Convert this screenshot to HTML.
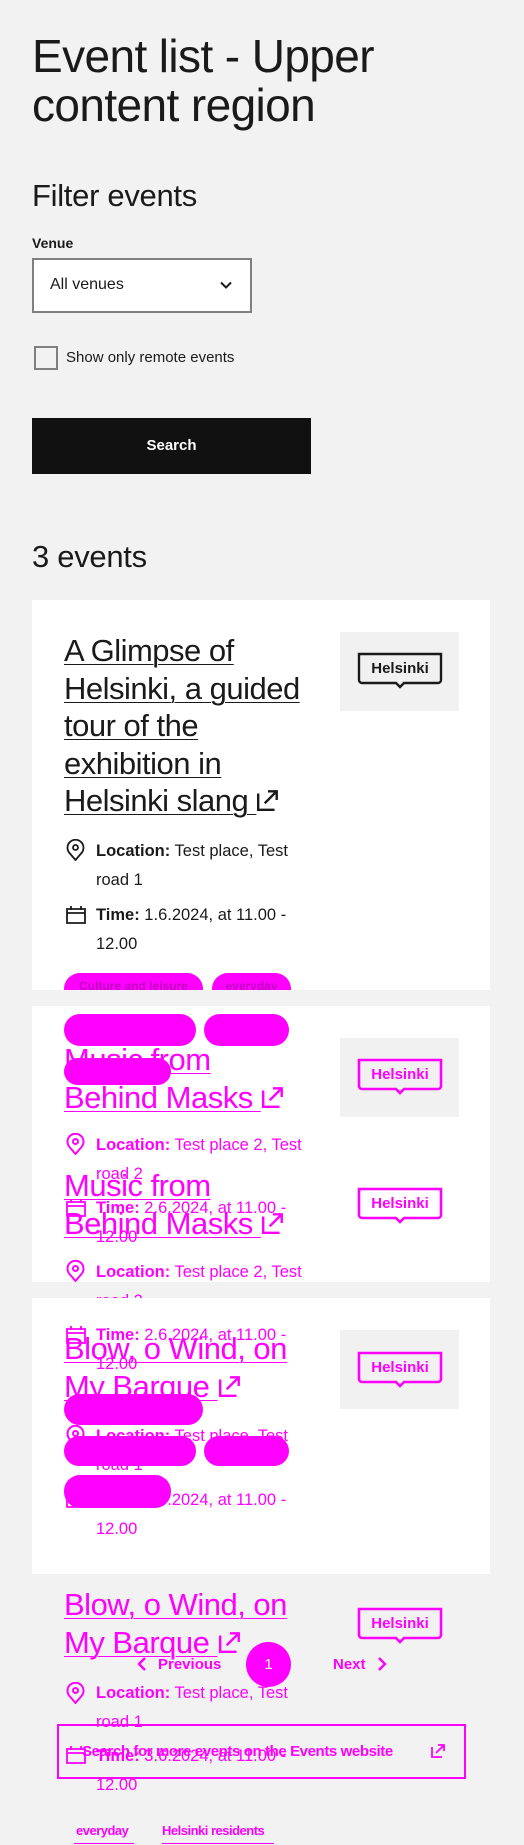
<!DOCTYPE html>
<html><head><meta charset="utf-8">
<style>
*{margin:0;padding:0;box-sizing:border-box}
body{width:524px;height:1845px;background:#f2f2f2;position:relative;overflow:hidden;font-family:"Liberation Sans",sans-serif;color:#1a1a1a}
.a{position:absolute;white-space:nowrap}
.card{position:absolute;left:32px;width:458px;background:#fff}
.t{font-size:31px;line-height:37.5px;letter-spacing:-0.5px;text-decoration:underline;text-decoration-thickness:1px;text-underline-offset:3px}
.m{font-size:16.5px;line-height:28.5px}
.mg{color:#ff00ff}
.pill{position:absolute;background:#ff00ff;border-radius:16px;color:#ff00ff;font-size:12px;font-weight:bold;text-align:center;overflow:hidden}
.img{position:absolute;left:340px;width:119px;height:79px;background:#f1f1f1}
.logo{position:absolute;left:357px;width:86px;height:38px}
</style></head><body>

<div class="a" style="left:32px;top:32px;font-size:46px;line-height:49px;letter-spacing:-0.6px">Event list - Upper<br>content region</div>
<div class="a" style="left:32px;top:178px;font-size:31px;line-height:36px;letter-spacing:-0.3px">Filter events</div>
<div class="a" style="left:32px;top:234px;font-size:14px;line-height:18px;font-weight:bold">Venue</div>
<div class="a" style="left:32px;top:258px;width:220px;height:55px;background:#fff;border:2px solid #808080"></div>
<div class="a" style="left:50px;top:275px;font-size:16px;line-height:20px">All venues</div>
<svg class="a" style="left:219px;top:278px" width="14" height="14" viewBox="0 0 14 14"><path d="M2 4.5l5 5 5-5" fill="none" stroke="#1a1a1a" stroke-width="2"/></svg>
<div class="a" style="left:34px;top:346px;width:24px;height:24px;border:2px solid #808080;background:#f2f2f2"></div>
<div class="a" style="left:66px;top:348px;font-size:15px;line-height:20px">Show only remote events</div>
<div class="a" style="left:32px;top:418px;width:279px;height:56px;background:#111;color:#fff;font-size:15px;font-weight:bold;text-align:center;line-height:56px">Search</div>
<div class="a" style="left:32px;top:539px;font-size:31px;line-height:36px;letter-spacing:-0.3px">3 events</div>

<!-- card 1 -->
<div class="card" style="top:600px;height:390px;overflow:hidden">
  <div class="pill" style="left:32px;top:373px;width:139px;height:32px;line-height:26px;color:#c000c0">Culture and leisure</div>
  <div class="pill" style="left:180px;top:373px;width:79px;height:32px;line-height:26px;color:#c000c0">everyday</div>
</div>
<div class="a t" style="left:64px;top:632px">A Glimpse of<br>Helsinki, a guided<br>tour of the<br>exhibition in<br>Helsinki slang <svg width="24" height="24" viewBox="0 0 22 22" style="vertical-align:-1px"><path d="M2 5v15h15M8 14L19 3M11 3h8v8" fill="none" stroke="#1a1a1a" stroke-width="2.2"/></svg></div>
<div class="img" style="top:632px"></div>
<svg class="logo" style="top:652px" viewBox="0 0 86 38"><path d="M2 2h82v26a3 3 0 0 1-3 3H47l-4 4-4-4H5a3 3 0 0 1-3-3z" fill="none" stroke="#1a1a1a" stroke-width="2.4"/><text x="43" y="21" font-family="Liberation Sans" font-weight="bold" font-size="15" text-anchor="middle" fill="#1a1a1a">Helsinki</text></svg>
<svg class="a" style="left:66px;top:839px" width="19" height="22" viewBox="0 0 19 22"><path d="M9.5 21l-6-7a8 8 0 1 1 12 0z" fill="none" stroke="#1a1a1a" stroke-width="1.8"/><circle cx="9.5" cy="8.5" r="2.5" fill="none" stroke="#1a1a1a" stroke-width="1.8"/></svg>
<div class="a m" style="left:96px;top:837px"><b>Location:</b> Test place, Test<br>road 1</div>
<svg class="a" style="left:66px;top:906px" width="20" height="18" viewBox="0 0 20 18"><path d="M1 3h18v14H1zM1 7h18M5 0v4M15 0v4" fill="none" stroke="#1a1a1a" stroke-width="1.8"/></svg>
<div class="a m" style="left:96px;top:901px"><b>Time:</b> 1.6.2024, at 11.00 -<br>12.00</div>

<!-- card 2 -->
<div class="card" style="top:1006px;height:276px"></div>
<div class="img" style="top:1038px"></div>
<svg class="logo" style="top:1058px" viewBox="0 0 86 38"><path d="M2 2h82v26a3 3 0 0 1-3 3H47l-4 4-4-4H5a3 3 0 0 1-3-3z" fill="none" stroke="#f0f" stroke-width="2.6"/><text x="43" y="21" font-family="Liberation Sans" font-weight="bold" font-size="15" text-anchor="middle" fill="#f0f">Helsinki</text></svg>
<div class="pill" style="left:64px;top:1014px;width:132px;height:32px"></div>
<div class="pill" style="left:204px;top:1014px;width:85px;height:32px"></div>
<div class="pill" style="left:64px;top:1058px;width:107px;height:27px"></div>
<div class="a t mg" style="left:64px;top:1041px">Music from<br>Behind Masks <svg width="24" height="24" viewBox="0 0 22 22" style="vertical-align:-1px"><path d="M2 5v15h15M8 14L19 3M11 3h8v8" fill="none" stroke="#f0f" stroke-width="2.2"/></svg></div>
<svg class="a" style="left:66px;top:1133px" width="19" height="22" viewBox="0 0 19 22"><path d="M9.5 21l-6-7a8 8 0 1 1 12 0z" fill="none" stroke="#f0f" stroke-width="2"/><circle cx="9.5" cy="8.5" r="2.5" fill="none" stroke="#f0f" stroke-width="2"/></svg>
<div class="a m mg" style="left:96px;top:1131px"><b>Location:</b> Test place 2, Test<br>road 2</div>
<div class="a t mg" style="left:64px;top:1167px">Music from<br>Behind Masks <svg width="24" height="24" viewBox="0 0 22 22" style="vertical-align:-1px"><path d="M2 5v15h15M8 14L19 3M11 3h8v8" fill="none" stroke="#f0f" stroke-width="2.2"/></svg></div>
<svg class="logo" style="top:1187px" viewBox="0 0 86 38"><path d="M2 2h82v26a3 3 0 0 1-3 3H47l-4 4-4-4H5a3 3 0 0 1-3-3z" fill="none" stroke="#f0f" stroke-width="2.6"/><text x="43" y="21" font-family="Liberation Sans" font-weight="bold" font-size="15" text-anchor="middle" fill="#f0f">Helsinki</text></svg>
<svg class="a" style="left:66px;top:1199px" width="20" height="18" viewBox="0 0 20 18"><path d="M1 3h18v14H1zM1 7h18M5 0v4M15 0v4" fill="none" stroke="#f0f" stroke-width="1.8"/></svg>
<div class="a m mg" style="left:96px;top:1194px"><b>Time:</b> 2.6.2024, at 11.00 -<br>12.00</div>
<svg class="a" style="left:66px;top:1260px" width="19" height="22" viewBox="0 0 19 22"><path d="M9.5 21l-6-7a8 8 0 1 1 12 0z" fill="none" stroke="#f0f" stroke-width="2"/><circle cx="9.5" cy="8.5" r="2.5" fill="none" stroke="#f0f" stroke-width="2"/></svg>
<div class="a m mg" style="left:96px;top:1258px"><b>Location:</b> Test place 2, Test<br>road 2</div>

<!-- card 3 -->
<div class="card" style="top:1298px;height:276px"></div>
<div class="img" style="top:1330px"></div>
<svg class="logo" style="top:1351px" viewBox="0 0 86 38"><path d="M2 2h82v26a3 3 0 0 1-3 3H47l-4 4-4-4H5a3 3 0 0 1-3-3z" fill="none" stroke="#f0f" stroke-width="2.6"/><text x="43" y="21" font-family="Liberation Sans" font-weight="bold" font-size="15" text-anchor="middle" fill="#f0f">Helsinki</text></svg>
<svg class="a" style="left:66px;top:1326px" width="20" height="18" viewBox="0 0 20 18"><path d="M1 3h18v14H1zM1 7h18M5 0v4M15 0v4" fill="none" stroke="#f0f" stroke-width="1.8"/></svg>
<div class="a m mg" style="left:96px;top:1321px"><b>Time:</b> 2.6.2024, at 11.00 -<br>12.00</div>
<div class="a t mg" style="left:64px;top:1330px">Blow, o Wind, on<br>My Barque <svg width="24" height="24" viewBox="0 0 22 22" style="vertical-align:-1px"><path d="M2 5v15h15M8 14L19 3M11 3h8v8" fill="none" stroke="#f0f" stroke-width="2.2"/></svg></div>
<div class="pill" style="left:64px;top:1394px;width:139px;height:31px"></div>
<svg class="a" style="left:66px;top:1425px" width="19" height="22" viewBox="0 0 19 22"><path d="M9.5 21l-6-7a8 8 0 1 1 12 0z" fill="none" stroke="#f0f" stroke-width="2"/><circle cx="9.5" cy="8.5" r="2.5" fill="none" stroke="#f0f" stroke-width="2"/></svg>
<div class="a m mg" style="left:96px;top:1422px"><b>Location:</b> Test place, Test<br>road 1</div>
<div class="pill" style="left:64px;top:1436px;width:132px;height:30px"></div>
<div class="pill" style="left:204px;top:1436px;width:85px;height:30px"></div>
<svg class="a" style="left:66px;top:1490px" width="20" height="18" viewBox="0 0 20 18"><path d="M1 3h18v14H1zM1 7h18M5 0v4M15 0v4" fill="none" stroke="#f0f" stroke-width="1.8"/></svg>
<div class="a m mg" style="left:96px;top:1486px"><b>Time:</b> 3.6.2024, at 11.00 -<br>12.00</div>
<div class="pill" style="left:64px;top:1475px;width:107px;height:33px"></div>

<!-- outside -->
<div class="a t mg" style="left:64px;top:1586px">Blow, o Wind, on<br>My Barque <svg width="24" height="24" viewBox="0 0 22 22" style="vertical-align:-1px"><path d="M2 5v15h15M8 14L19 3M11 3h8v8" fill="none" stroke="#f0f" stroke-width="2.2"/></svg></div>
<svg class="logo" style="top:1607px" viewBox="0 0 86 38"><path d="M2 2h82v26a3 3 0 0 1-3 3H47l-4 4-4-4H5a3 3 0 0 1-3-3z" fill="none" stroke="#f0f" stroke-width="2.6"/><text x="43" y="21" font-family="Liberation Sans" font-weight="bold" font-size="15" text-anchor="middle" fill="#f0f">Helsinki</text></svg>
<svg class="a" style="left:136px;top:1657px" width="12" height="14" viewBox="0 0 12 14"><path d="M9 1L3 7l6 6" fill="none" stroke="#f0f" stroke-width="2.4"/></svg>
<div class="a mg" style="left:158px;top:1656px;font-size:15px;line-height:18px;font-weight:bold">Previous</div>
<div class="a" style="left:246px;top:1642px;width:45px;height:45px;border-radius:50%;background:#f0f;color:#fff;font-size:15px;line-height:45px;text-align:center">1</div>
<div class="a mg" style="left:333px;top:1656px;font-size:15px;line-height:18px;font-weight:bold">Next</div>
<svg class="a" style="left:376px;top:1657px" width="12" height="14" viewBox="0 0 12 14"><path d="M3 1l6 6-6 6" fill="none" stroke="#f0f" stroke-width="2.4"/></svg>
<svg class="a" style="left:66px;top:1682px" width="19" height="22" viewBox="0 0 19 22"><path d="M9.5 21l-6-7a8 8 0 1 1 12 0z" fill="none" stroke="#f0f" stroke-width="2"/><circle cx="9.5" cy="8.5" r="2.5" fill="none" stroke="#f0f" stroke-width="2"/></svg>
<div class="a m mg" style="left:96px;top:1679px"><b>Location:</b> Test place, Test<br>road 1</div>
<div class="a" style="left:57px;top:1724px;width:409px;height:55px;border:2px solid #f0f"></div>
<div class="a mg" style="left:82px;top:1743px;font-size:15px;line-height:18px;font-weight:bold;letter-spacing:-0.4px">Search for more events on the Events website</div>
<svg class="a" style="left:431px;top:1744px" width="14" height="14" viewBox="0 0 14 14"><path d="M1 3v10h10M5 9l8-8M7 1h6v6" fill="none" stroke="#f0f" stroke-width="1.8"/></svg>
<svg class="a" style="left:66px;top:1746px" width="20" height="18" viewBox="0 0 20 18"><path d="M1 3h18v14H1zM1 7h18M5 0v4M15 0v4" fill="none" stroke="#f0f" stroke-width="1.8"/></svg>
<div class="a m mg" style="left:96px;top:1742px"><b>Time:</b> 3.6.2024, at 11.00 -<br>12.00</div>
<div class="a mg" style="left:76px;top:1823px;font-size:13px;line-height:16px;font-weight:bold;letter-spacing:-0.5px">everyday</div>
<div class="a" style="left:74px;top:1843px;width:60px;height:1px;background:#f0f"></div>
<div class="a mg" style="left:162px;top:1823px;font-size:13px;line-height:16px;font-weight:bold;letter-spacing:-0.5px">Helsinki residents</div>
<div class="a" style="left:162px;top:1843px;width:112px;height:1px;background:#f0f"></div>
</body></html>
